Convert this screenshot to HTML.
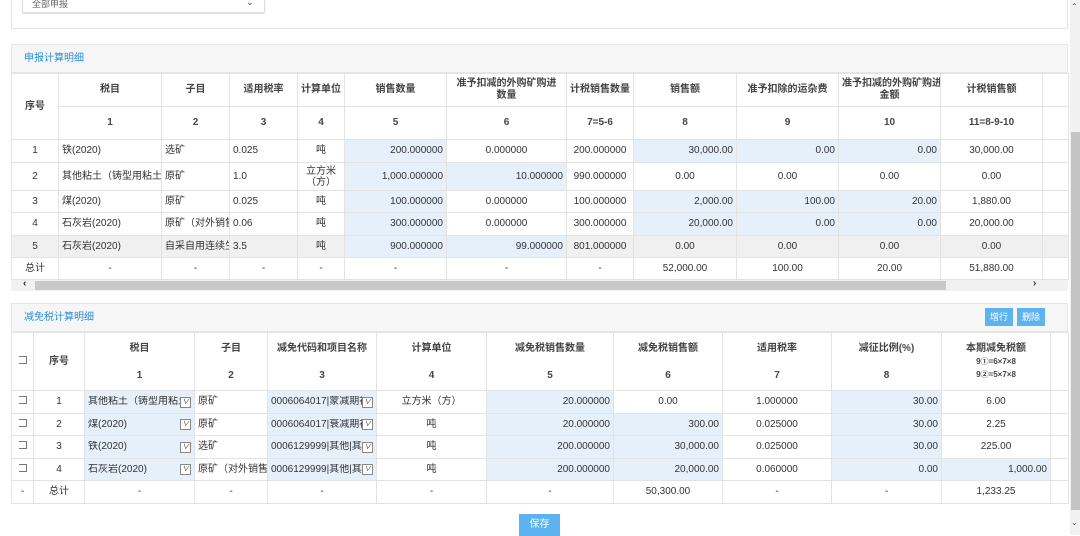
<!DOCTYPE html>
<html><head><meta charset="utf-8"><style>
*{box-sizing:border-box;margin:0;padding:0}
body{width:1080px;height:535px;overflow:hidden;background:#fff;position:relative;font-family:"Liberation Sans","Noto Sans CJK SC",sans-serif;font-size:10px;color:#333}
.abs{position:absolute}
table{border-collapse:collapse;table-layout:fixed;position:absolute}
td{border:1px solid #e3e3e3;padding:0 3px;white-space:nowrap;overflow:hidden;text-align:center;line-height:12px}
.h td{font-weight:bold;color:#444}
.r{text-align:right}.l{text-align:left}
.b{background:#e6f0fb}
.g td{background:#f0f0f0}
.title{background:#f6f6f6;color:#2a8fd6;font-size:10px;border:1px solid #e6e6e6;padding-left:12px}
.sw{display:flex;align-items:center;height:14px;overflow:hidden}
.sw span{flex:1;overflow:hidden;white-space:nowrap}
.sel{flex:none;width:11px;height:11px;border:1px solid #888;font-size:7px;line-height:9px;text-align:center;background:#fff}
.cb{display:inline-block;width:8px;height:8px;border:1px solid #777;border-left:none}
</style></head><body>
<div class="abs" style="left:11px;top:-2px;width:1057px;height:31px;border:1px solid #e3e3e3;border-top:none"></div>
<div class="abs" style="left:22px;top:-4px;width:243px;height:17px;border:1px solid #ddd;border-radius:2px;box-shadow:0 1px 1px #ddd;font-size:9px;color:#666;padding-left:9px">全部申报<span style="position:absolute;right:10px;top:0;font-size:10px">⌄</span></div>

<div class="abs title" style="left:11px;top:44px;width:1057px;height:29px;line-height:27px">申报计算明细</div>
<table style="left:11px;top:73px;width:1057px">
<colgroup><col style="width:47px"><col style="width:103px"><col style="width:68px"><col style="width:68px"><col style="width:47px"><col style="width:102px"><col style="width:120px"><col style="width:67px"><col style="width:103px"><col style="width:102px"><col style="width:102px"><col style="width:102px"><col style="width:26px"></colgroup>
<tr class="h" style="height:33px"><td rowspan="2">序号</td><td>税目</td><td>子目</td><td>适用税率</td><td>计算单位</td><td>销售数量</td><td>准予扣减的外购矿购进<br>数量</td><td>计税销售数量</td><td>销售额</td><td>准予扣除的运杂费</td><td>准予扣减的外购矿购进<br>金额</td><td>计税销售额</td><td></td></tr>
<tr class="h" style="height:33px"><td>1</td><td>2</td><td>3</td><td>4</td><td>5</td><td>6</td><td>7=5-6</td><td>8</td><td>9</td><td>10</td><td>11=8-9-10</td><td></td></tr>
<tr style="height:23px"><td>1</td><td class="l">铁(2020)</td><td class="l">选矿</td><td class="l">0.025</td><td>吨</td><td class="r b">200.000000</td><td>0.000000</td><td>200.000000</td><td class="r b">30,000.00</td><td class="r b">0.00</td><td class="r b">0.00</td><td>30,000.00</td><td></td></tr>
<tr style="height:28px"><td>2</td><td class="l">其他粘土（铸型用粘土、</td><td class="l">原矿</td><td class="l">1.0</td><td style="line-height:11px">立方米<br>（方）</td><td class="r b">1,000.000000</td><td class="r b">10.000000</td><td>990.000000</td><td>0.00</td><td>0.00</td><td>0.00</td><td>0.00</td><td></td></tr>
<tr style="height:22px"><td>3</td><td class="l">煤(2020)</td><td class="l">原矿</td><td class="l">0.025</td><td>吨</td><td class="r b">100.000000</td><td>0.000000</td><td>100.000000</td><td class="r b">2,000.00</td><td class="r b">100.00</td><td class="r b">20.00</td><td>1,880.00</td><td></td></tr>
<tr style="height:23px"><td>4</td><td class="l">石灰岩(2020)</td><td class="l">原矿（对外销售</td><td class="l">0.06</td><td>吨</td><td class="r b">300.000000</td><td>0.000000</td><td>300.000000</td><td class="r b">20,000.00</td><td class="r b">0.00</td><td class="r b">0.00</td><td>20,000.00</td><td></td></tr>
<tr class="g" style="height:22px"><td>5</td><td class="l">石灰岩(2020)</td><td class="l">自采自用连续生</td><td class="l">3.5</td><td>吨</td><td class="r" style="background:#e6f0fb">900.000000</td><td class="r" style="background:#e6f0fb">99.000000</td><td>801.000000</td><td>0.00</td><td>0.00</td><td>0.00</td><td>0.00</td><td></td></tr>
<tr style="height:22px"><td>总计</td><td>-</td><td>-</td><td>-</td><td>-</td><td>-</td><td>-</td><td>-</td><td>52,000.00</td><td>100.00</td><td>20.00</td><td>51,880.00</td><td></td></tr>
</table>
<div class="abs" style="left:11px;top:280px;width:1057px;height:11px;background:#f1f1f1"></div>
<div class="abs" style="left:35px;top:281px;width:911px;height:9px;background:#c8c8c8"></div>
<div class="abs" style="left:23px;top:278px;font-size:10px;font-weight:bold">‹</div>
<div class="abs" style="left:1033px;top:278px;font-size:10px;font-weight:bold">›</div>

<div class="abs title" style="left:11px;top:303px;width:1057px;height:29px;line-height:27px">减免税计算明细</div>
<div class="abs" style="left:985px;top:308px;width:28px;height:18px;background:#5cb3f0;color:#fff;text-align:center;line-height:18px;font-size:9px">增行</div>
<div class="abs" style="left:1017px;top:308px;width:28px;height:18px;background:#5cb3f0;color:#fff;text-align:center;line-height:18px;font-size:9px">删除</div>
<table style="left:11px;top:332px;width:1057px">
<colgroup><col style="width:22px"><col style="width:51px"><col style="width:110px"><col style="width:73px"><col style="width:109px"><col style="width:110px"><col style="width:127px"><col style="width:109px"><col style="width:109px"><col style="width:110px"><col style="width:109px"><col style="width:18px"></colgroup>
<tr class="h" style="height:58px"><td><span class="cb"></span></td><td>序号</td><td style="line-height:27px">税目<br>1</td><td style="line-height:27px">子目<br>2</td><td style="line-height:27px">减免代码和项目名称<br>3</td><td style="line-height:27px">计算单位<br>4</td><td style="line-height:27px">减免税销售数量<br>5</td><td style="line-height:27px">减免税销售额<br>6</td><td style="line-height:27px">适用税率<br>7</td><td style="line-height:27px">减征比例(%)<br>8</td><td style="line-height:13px">本期减免税额<br><span style="font-size:8px">9①=6×7×8<br>9②=5×7×8</span></td><td></td></tr>
<tr style="height:23px"><td><span class="cb"></span></td><td>1</td><td class="l b"><div class="sw"><span>其他粘土（铸型用粘土</span><i class="sel">∨</i></div></td><td class="l">原矿</td><td class="l b"><div class="sw"><span>0006064017|蒙减期初</span><i class="sel">∨</i></div></td><td>立方米（方）</td><td class="r b">20.000000</td><td>0.00</td><td>1.000000</td><td class="r b">30.00</td><td>6.00</td><td></td></tr>
<tr style="height:22px"><td><span class="cb"></span></td><td>2</td><td class="l b"><div class="sw"><span>煤(2020)</span><i class="sel">∨</i></div></td><td class="l">原矿</td><td class="l b"><div class="sw"><span>0006064017|衰减期初</span><i class="sel">∨</i></div></td><td>吨</td><td class="r b">20.000000</td><td class="r b">300.00</td><td>0.025000</td><td class="r b">30.00</td><td>2.25</td><td></td></tr>
<tr style="height:23px"><td><span class="cb"></span></td><td>3</td><td class="l b"><div class="sw"><span>铁(2020)</span><i class="sel">∨</i></div></td><td class="l">选矿</td><td class="l b"><div class="sw"><span>0006129999|其他|其他</span><i class="sel">∨</i></div></td><td>吨</td><td class="r b">200.000000</td><td class="r b">30,000.00</td><td>0.025000</td><td class="r b">30.00</td><td>225.00</td><td></td></tr>
<tr style="height:22px"><td><span class="cb"></span></td><td>4</td><td class="l b"><div class="sw"><span>石灰岩(2020)</span><i class="sel">∨</i></div></td><td class="l">原矿（对外销售）</td><td class="l b"><div class="sw"><span>0006129999|其他|其他</span><i class="sel">∨</i></div></td><td>吨</td><td class="r b">200.000000</td><td class="r b">20,000.00</td><td>0.060000</td><td class="r b">0.00</td><td class="r b">1,000.00</td><td></td></tr>
<tr style="height:23px"><td>-</td><td>总计</td><td>-</td><td>-</td><td>-</td><td>-</td><td>-</td><td>50,300.00</td><td>-</td><td>-</td><td>1,233.25</td><td></td></tr>
</table>
<div class="abs" style="left:519px;top:514px;width:41px;height:22px;background:#5cb3f0;color:#fff;text-align:center;line-height:22px;font-size:10px">保存</div>

<div class="abs" style="left:1070px;top:0;width:10px;height:535px;background:#f1f1f1"></div>
<div class="abs" style="left:1071px;top:132px;width:9px;height:378px;background:#c4c4c4"></div>
<div class="abs" style="left:1071px;top:2px;font-size:8px;color:#555">⌃</div>
<div class="abs" style="left:1071px;top:518px;font-size:8px;color:#555">⌄</div>
</body></html>
